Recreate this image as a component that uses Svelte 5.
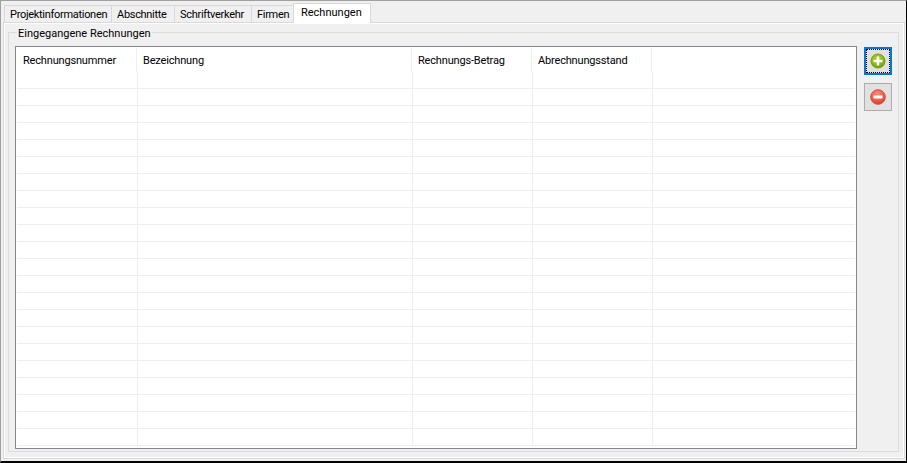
<script>
  const tabs = [
    { label: 'Projektinformationen', width: 108 },
    { label: 'Abschnitte', width: 64 },
    { label: 'Schriftverkehr', width: 78 },
    { label: 'Firmen', width: 43 },
    { label: 'Rechnungen', width: 78 },
  ];
  const activeTab = 'Rechnungen';
  const columns = ['Rechnungsnummer', 'Bezeichnung', 'Rechnungs-Betrag', 'Abrechnungsstand', ''];
  const rows = Array.from({ length: 22 }, (_, i) => i);
</script>

<div class="window">
  <div class="tabs">
    {#each tabs as tab}
      <div class="tab" class:active={tab.label === activeTab} style="width: {tab.width}px">{tab.label}</div>
    {/each}
  </div>

  <div class="panel">
    <div class="group">
      <span class="legend">Eingegangene Rechnungen</span>

      <div class="grid">
        <div class="head">
          {#each columns as col}
            <div class="head-cell">{col}</div>
          {/each}
        </div>
        {#each rows as row}
          <div class="row" data-row={row}>
            {#each columns as col}
              <div class="cell"></div>
            {/each}
          </div>
        {/each}
      </div>

      <div class="actions">
        <button class="action focused" aria-label="Hinzufügen">
          <svg width="18" height="18" viewBox="0 0 18 18">
            <defs>
              <radialGradient id="green" cx="45%" cy="35%" r="70%">
                <stop offset="0" stop-color="#b4d83a" />
                <stop offset="0.6" stop-color="#8aba10" />
                <stop offset="1" stop-color="#62960a" />
              </radialGradient>
            </defs>
            <circle cx="9" cy="9" r="7" fill="url(#green)" stroke="#6f9e0c" />
            <path d="M7.75 4.5h2.5v3.25h3.25v2.5h-3.25v3.25h-2.5v-3.25H4.5v-2.5h3.25z" fill="#fff" />
          </svg>
        </button>
        <button class="action" aria-label="Entfernen">
          <svg width="18" height="18" viewBox="0 0 18 18">
            <defs>
              <radialGradient id="red" cx="45%" cy="30%" r="75%">
                <stop offset="0" stop-color="#fb9080" />
                <stop offset="0.6" stop-color="#ee5a45" />
                <stop offset="1" stop-color="#cf3a28" />
              </radialGradient>
            </defs>
            <circle cx="9" cy="9" r="7.3" fill="url(#red)" stroke="#dd4b36" />
            <rect x="4.5" y="7.5" width="9" height="3" fill="#fff" />
          </svg>
        </button>
      </div>
    </div>
  </div>
</div>

<style>
  :global(body) {
    background: #f0f0f0;
  }

  .window {
    box-sizing: border-box;
    width: 907px;
    height: 463px;
    display: flex;
    flex-direction: column;
    padding: 3px 1px 0 2px;
    background: #f0f0f0;
    border-top: 1px solid #a0a0a0;
    border-left: 1px solid #a0a0a0;
    border-right: 1px solid #000;
    border-bottom: 2px solid #000;
    font-family: Roboto, sans-serif;
    font-size: 11px;
    color: #000;
    overflow: hidden;
  }

  .tabs {
    display: flex;
    align-items: flex-end;
    height: 18px;
    padding-left: 1px;
  }

  .tab {
    box-sizing: border-box;
    height: 17px;
    padding-left: 5px;
    line-height: 17px;
    letter-spacing: -0.3px;
    white-space: nowrap;
    border: 1px solid #d9d9d9;
    border-bottom: 0;
    margin-right: -1px;
  }

  .tab.active {
    position: relative;
    height: 20px;
    margin-bottom: -1px;
    padding-left: 7px;
    line-height: 17px;
    letter-spacing: 0;
    background: #fff;
    z-index: 1;
  }

  .panel {
    flex: 1;
    box-sizing: border-box;
    display: flex;
    padding: 9px 5px 6px 4px;
    border: 1px solid #d9d9d9;
    box-shadow: inset 0 0 0 1px #fff;
    margin-bottom: 2px;
  }

  .group {
    position: relative;
    flex: 1;
    display: flex;
    gap: 7px;
    align-items: flex-start;
    padding: 13px 5px 2px 6px;
    border: 1px solid #dcdcdc;
  }

  .legend {
    position: absolute;
    top: -7px;
    left: 8px;
    padding: 0 1px;
    line-height: 15px;
    background: #f0f0f0;
  }

  .grid {
    box-sizing: border-box;
    width: 842px;
    height: 403px;
    padding: 1px 1px 0 1px;
    background: #fff;
    border: 1px solid #828790;
  }

  .head {
    display: grid;
    grid-template-columns: 120px 275px 120px 120px 1fr;
    height: 24px;
  }

  .head-cell {
    box-sizing: border-box;
    padding-left: 6px;
    line-height: 26px;
    letter-spacing: -0.17px;
    border-right: 1px solid #eceff1;
    overflow: hidden;
  }

  .head-cell:last-child {
    border-right: 0;
  }

  .row {
    box-sizing: border-box;
    display: grid;
    grid-template-columns: 121px 275px 120px 120px 1fr;
    height: 17px;
    border-bottom: 1px solid #efefef;
  }

  .cell {
    border-right: 1px solid #efefef;
  }

  .cell:last-child {
    border-right: 0;
  }

  .actions {
    display: flex;
    flex-direction: column;
    gap: 8px;
    padding-top: 1px;
  }

  .action {
    box-sizing: border-box;
    width: 28px;
    height: 28px;
    padding: 0;
    display: flex;
    align-items: center;
    justify-content: center;
    background: #e1e1e1;
    border: 1px solid #adadad;
  }

  .action.focused {
    border: 2px solid #0078d7;
    outline: 1px dotted #000;
    outline-offset: -3px;
  }
</style>
